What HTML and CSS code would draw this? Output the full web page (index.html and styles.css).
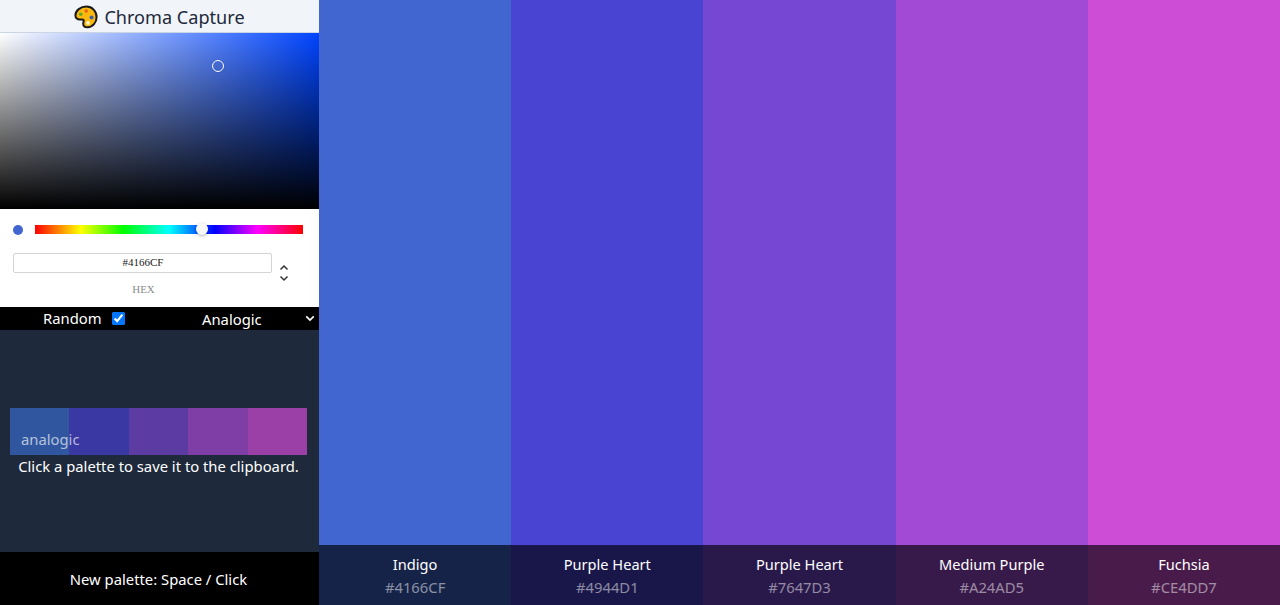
FILE: index.html
```html
<!DOCTYPE html>
<html lang="en">
<head>
<meta charset="utf-8">
<title>Chroma Capture</title>
<link rel="stylesheet" href="styles.css">
</head>
<body>
<div class="app">
  <aside class="sidebar">
    <header class="brand">
      <svg class="brand-icon" viewBox="0 0 24 24" width="24" height="24" aria-hidden="true">
        <path d="M12.5 1.6C6.6 1.6 1.4 5.4 1.4 10.2c0 3 2.2 4.6 4.600 4.400 1.900-.2 3-.4 3.600.5.6 1-.5 2-.4 3.600.1 2.300 2 3.700 4.500 3.600 5-.2 8.900-4.800 8.900-10.300 0-5.800-4.600-10.400-10.100-10.400z" fill="#fbb910" stroke="#1a1a1a" stroke-width="2"/>
        <circle cx="6.800" cy="9.200" r="1.800" fill="#5fa82a"/>
        <circle cx="12.200" cy="6" r="1.700" fill="#e8591c"/>
        <circle cx="17.500" cy="12.500" r="2" fill="#3f5fa8"/>
        <circle cx="14" cy="18" r="1.900" fill="#fdf3c8"/>
      </svg>
      <span class="brand-name">Chroma Capture</span>
    </header>
    <div class="picker-field"><span class="picker-cursor"></span></div>
    <div class="picker-controls">
      <div class="hue-row">
        <span class="hue-dot"></span>
        <div class="hue-track"><span class="hue-thumb"></span></div>
      </div>
      <div class="hex-row">
        <div class="hex-col">
          <input class="hex-input" type="text" value="#4166CF" readonly>
          <span class="hex-label">HEX</span>
        </div>
        <svg class="hex-toggle" viewBox="0 0 12 20" width="12" height="20" aria-hidden="true">
          <path d="M2.500 6.500 6 3l3.500 3.500M2.500 13.500 6 17l3.500-3.500" fill="none" stroke="#333" stroke-width="1.500"/>
        </svg>
      </div>
    </div>
    <div class="options">
      <label class="random"><span>Random</span><input class="random-box" type="checkbox" checked></label>
      <div class="mode"><span>Analogic</span>
        <svg class="mode-arrow" viewBox="0 0 12 8" width="10" height="7" aria-hidden="true"><path d="M1.500 1.500 6 6l4.500-4.500" fill="none" stroke="#fff" stroke-width="2"/></svg>
      </div>
    </div>
    <div class="saved">
      <div class="mini">
        <span class="mini-swatch s1"></span><span class="mini-swatch s2"></span><span class="mini-swatch s3"></span><span class="mini-swatch s4"></span><span class="mini-swatch s5"></span>
        <span class="mini-label">analogic</span>
      </div>
      <p class="saved-hint">Click a palette to save it to the clipboard.</p>
    </div>
    <footer class="shortcut">New palette: Space / Click</footer>
  </aside>
  <main class="palette">
    <section class="col c1"><div class="col-info"><span class="col-name">Indigo</span><span class="col-hex">#4166CF</span></div></section>
    <section class="col c2"><div class="col-info"><span class="col-name">Purple Heart</span><span class="col-hex">#4944D1</span></div></section>
    <section class="col c3"><div class="col-info"><span class="col-name">Purple Heart</span><span class="col-hex">#7647D3</span></div></section>
    <section class="col c4"><div class="col-info"><span class="col-name">Medium Purple</span><span class="col-hex">#A24AD5</span></div></section>
    <section class="col c5"><div class="col-info"><span class="col-name">Fuchsia</span><span class="col-hex">#CE4DD7</span></div></section>
  </main>
</div>
</body>
</html>
```
FILE: styles.css
```css
* { box-sizing: border-box; }
html, body { margin: 0; height: 100%; overflow: hidden; }
body { font-family: "Noto Sans", "Open Sans", sans-serif; color: #fff; background: #000; }
.app { display: flex; height: 605px; }
.sidebar { width: 319px; flex: none; display: flex; flex-direction: column; }
.brand { height: 33px; flex: none; background: #f1f5f9; color: #1e293b; display: flex; align-items: center; justify-content: center; gap: 6px; padding-top: 2px; border-bottom: 1px solid #cbd5e1; }
.brand-icon { flex: none; }
.brand-name { font-size: 18.100px; line-height: 28px; }
.picker-field { position: relative; height: 176px; flex: none; background: linear-gradient(to top, #000, transparent), linear-gradient(to right, #fff, #0044ff); }
.picker-cursor { position: absolute; left: 212px; top: 27px; width: 12px; height: 12px; border-radius: 50%; border: 1px solid #fff; box-shadow: 0 0 1px rgba(0,0,0,.4); }
.picker-controls { height: 98px; flex: none; background: #fff; padding: 16px 16px 0 13px; }
.hue-row { display: flex; align-items: center; gap: 12px; height: 9px; }
.hue-dot { width: 10px; height: 10px; border-radius: 50%; background: #4166cf; flex: none; }
.hue-track { position: relative; flex: 1; height: 9px; background: linear-gradient(to right, #f00 0%, #ff0 17%, #0f0 33%, #0ff 50%, #00f 67%, #f0f 83%, #f00 100%); }
.hue-thumb { position: absolute; left: 161px; top: -2px; width: 12px; height: 12px; border-radius: 50%; background: #f8f8f8; box-shadow: 0 1px 3px rgba(0,0,0,.3); }
.hex-row { display: flex; gap: 6px; margin-top: 19px; }
.hex-col { width: 259px; display: flex; flex-direction: column; align-items: center; }
.hex-input { width: 100%; height: 20px; border: 1px solid #d4d4d4; border-radius: 2px; background: #fff; color: #222; font: 11px "Liberation Serif", serif; text-align: center; padding: 0 0 2px 1px; outline: 0; }
.hex-label { margin-top: 9px; font: 11px/14px "Liberation Serif", serif; color: #8c8c8c; padding-left: 2px; }
.hex-toggle { margin-top: 10px; flex: none; }
.options { height: 23px; flex: none; background: #000; display: flex; align-items: center; font-size: 14.800px; }
.random { display: flex; align-items: center; gap: 11px; width: 190px; padding-left: 43px; }
.random > span { margin-top: -2px; }
.random-box { margin: 0 0 0 -1px; width: 13px; height: 13px; accent-color: #0075ff; }
.mode { flex: 1; display: flex; align-items: center; justify-content: space-between; padding: 0 4px 0 12px; }
.mode-arrow { flex: none; }
.saved { flex: 1; background: #1e293b; display: flex; flex-direction: column; padding: 78px 12px 0 10px; }
.mini { position: relative; display: flex; height: 47px; flex: none; }
.mini-swatch { flex: 1; }
.s1 { background: #3156a0; }
.s2 { background: #3a38a2; }
.s3 { background: #5c3ba3; }
.s4 { background: #7e3ea5; }
.s5 { background: #9b40a6; }
.mini-label { position: absolute; left: 11px; bottom: 6px; font-size: 14.800px; line-height: 20px; color: rgba(255,255,255,.65); }
.saved-hint { margin: -1px 0 0; font-size: 14.800px; line-height: 24px; text-align: center; white-space: nowrap; }
.shortcut { height: 53px; flex: none; background: #000; display: flex; align-items: center; justify-content: center; font-size: 14.800px; padding-right: 2px; }
.palette { flex: 1; display: flex; }
.col { flex: 1; display: flex; flex-direction: column; justify-content: flex-end; }
.c1 { background: #4166cf; }
.c2 { background: #4944d1; }
.c3 { background: #7647d3; }
.c4 { background: #a24ad5; }
.c5 { background: #ce4dd7; }
.col-info { height: 60px; background: rgba(0,0,0,.65); display: flex; flex-direction: column; align-items: center; padding-top: 7px; }
.col-name { font-size: 14.600px; line-height: 24px; }
.col-hex { font-size: 14.800px; line-height: 22px; color: rgba(255,255,255,.5); }
```
